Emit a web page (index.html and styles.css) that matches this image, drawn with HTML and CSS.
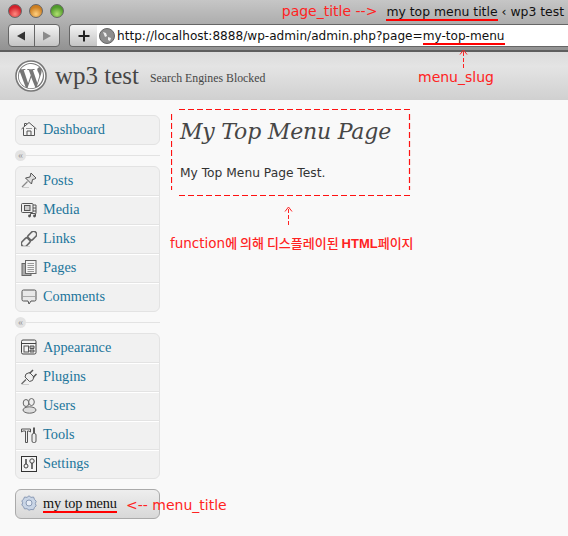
FILE: index.html
```html
<!DOCTYPE html>
<html lang="en">
<head>
    <meta charset="UTF-8">
    <meta name="viewport" content="width=device-width, initial-scale=1.0">
    <title>my top menu title ‹ wp3 test</title>
    <link rel="stylesheet" href="styles.css">
</head>
<body>
    <div class="browser">
        <div class="titlebar">
            <div class="lights">
                <span class="light red"></span>
                <span class="light orange"></span>
                <span class="light green"></span>
            </div>
            <div class="page-title"><span class="anno">page_title --&gt;</span><span class="underlined">my top menu title</span> ‹ wp3 test</div>
        </div>
        <div class="toolbar">
            <div class="nav-btns">
                <span class="nav-btn"><svg width="10" height="10" viewBox="0 0 10 10"><path d="M1 5 9 .5v9z" fill="#333"/></svg></span>
                <span class="nav-btn"><svg width="10" height="10" viewBox="0 0 10 10"><path d="M9 5 1 .5v9z" fill="#8a8a8a"/></svg></span>
            </div>
            <div class="address">
                <span class="add-btn"><svg width="12" height="12" viewBox="0 0 12 12"><path d="M6 .5v11M.5 6h11" stroke="#222" stroke-width="2"/></svg></span>
                <div class="url-field">
                    <svg class="globe" width="16" height="16" viewBox="0 0 16 16"><circle cx="8" cy="8" r="7.500" fill="#8d8d8d" stroke="#666"/><path d="M4 4l3 1 1 3-2 1zM9 9l3 1-1 3-2-1z" fill="#eee"/></svg>
                    <span class="url">http://localhost:8888/wp-admin/admin.php?page=<span class="underlined">my-top-menu</span></span>
                </div>
            </div>
        </div>
    </div>

    <div class="wp-header">
        <svg class="wp-logo" width="32" height="32" viewBox="0 0 33 33">
            <circle cx="16.500" cy="16.500" r="15.500" fill="#fff" stroke="#777" stroke-width="1.600"/>
            <circle cx="16.500" cy="16.500" r="13.400" fill="#777"/>
            <path d="M4 17c0 5 3 9 7 11L5 12c-.7 1.500-1 3.200-1 5zm21-1c0-1.500-.6-2.600-1-3.400-.7-1-1.200-1.800-1-2.900.1-1.200 1-2.200 2.200-2.200A13 13 0 0 0 6 9.500h.9c1.300 0 3.400-.2 3.400-.2.700 0 .8 1 .1 1.100 0 0-.7.100-1.400.1l4.500 13.400 2.700-8.100-1.900-5.300c-.7 0-1.300-.1-1.300-.1-.7 0-.6-1.100.1-1.100 0 0 2 .2 3.300.2 1.300 0 3.400-.2 3.400-.2.700 0 .8 1 .1 1.100 0 0-.7.100-1.400.1l4.500 13.300 1.200-4.100c.5-1.600.9-2.800.9-3.800zm-8.300 1.700L13 28.600a13 13 0 0 0 8-.2l-.1-.2zM27.300 10c.1.400.1.900.1 1.400 0 1.300-.2 2.800-1 4.600l-3.800 11A13 13 0 0 0 27.300 10z" fill="#fff"/>
        </svg>
        <span class="site-name">wp3 test</span>
        <span class="site-note">Search Engines Blocked</span>
        <span class="anno anno-slug">menu_slug</span>
    </div>

    <div class="wp-body">
        <nav class="sidebar">
            <ul class="menu-group">
                <li class="menu-item">
                    <svg class="icon" viewBox="0 0 16 16"><path d="M.5 8 8 1.500 15.500 8M2.500 7v7.500h11V7M6 14.500V10h4v4.500M3.500 5V2.500h2v1" fill="#f4f4f4" stroke="#555"/><path d="M5 7.500h6" stroke="#999"/></svg>
                    Dashboard
                </li>
            </ul>
            <div class="collapse"><span class="collapse-btn">«</span></div>
            <ul class="menu-group">
                <li class="menu-item">
                    <svg class="icon" viewBox="0 0 16 16"><path d="M1 15l5.500-5.500" stroke="#888" stroke-width="1.200"/><path d="M10 1l5 5-1.500 1-2 .5-1 4.500-6-6 4.500-1 .5-2z" fill="#ddd" stroke="#555"/><path d="M1 15.500h7" stroke="#ccc"/></svg>
                    Posts
                </li>
                <li class="menu-item">
                    <svg class="icon" viewBox="0 0 16 16"><rect x=".5" y="1.500" width="11.500" height="9" rx="1" fill="#eee" stroke="#555"/><rect x="3.500" y="3.500" width="5.500" height="5" fill="#ccc" stroke="#555"/><path d="M12 3h3v8.500M12 6h3M12 9h3" fill="none" stroke="#555"/><path d="M9.500 14V11.500h5v2.500" fill="none" stroke="#555"/><circle cx="8.500" cy="14" r="1.400" fill="#555"/><circle cx="13.500" cy="14" r="1.400" fill="#555"/></svg>
                    Media
                </li>
                <li class="menu-item">
                    <svg class="icon" viewBox="0 0 16 16"><g transform="rotate(-45 8 8)" fill="none" stroke="#666" stroke-width="1.600"><rect x="-1.500" y="5" width="10" height="6" rx="3"/><rect x="7.500" y="5" width="10" height="6" rx="3"/></g><path d="M1 15.500h8" stroke="#ccc"/></svg>
                    Links
                </li>
                <li class="menu-item">
                    <svg class="icon" viewBox="0 0 16 16"><rect x="1" y="3.500" width="9" height="12" fill="#aaa" stroke="#666"/><rect x="4.500" y=".5" width="10.500" height="13" fill="#f4f4f4" stroke="#666"/><path d="M6.500 3.500h6.500M6.500 5.500h6.500M6.500 7.500h6.500M6.500 9.500h6.500M6.500 11.500h6.500" stroke="#999"/></svg>
                    Pages
                </li>
                <li class="menu-item">
                    <svg class="icon" viewBox="0 0 16 16"><path d="M2.500 1h11a1.500 1.500 0 0 1 1.500 1.500v8a1.500 1.500 0 0 1-1.500 1.500H10l-2 3-1-3H2.500A1.500 1.500 0 0 1 1 10.500v-8A1.500 1.500 0 0 1 2.500 1z" fill="#e8e8e8" stroke="#555"/><path d="M2 7.500h12" stroke="#aaa"/></svg>
                    Comments
                </li>
            </ul>
            <div class="collapse"><span class="collapse-btn">«</span></div>
            <ul class="menu-group">
                <li class="menu-item">
                    <svg class="icon" viewBox="0 0 16 16"><rect x=".5" y="1" width="14.500" height="14" rx="1.500" fill="#f4f4f4" stroke="#444"/><path d="M1 4.500h14" stroke="#444"/><rect x="3" y="7" width="4.500" height="6" fill="#f4f4f4" stroke="#555"/><path d="M9 7h4v2.500H9zM9 11h4v2H9z" fill="#bbb" stroke="#555"/></svg>
                    Appearance
                </li>
                <li class="menu-item">
                    <svg class="icon" viewBox="0 0 16 16"><path d="M.5 15 5 10.500" stroke="#666" stroke-width="1.300"/><path d="M4 8l4.500 4.500 3-1 1.500-3.500-4.500-4.500L5 5z" fill="#eee" stroke="#555"/><path d="M8.500 4.500 12 1M12 8.500 15.500 5" stroke="#555" stroke-width="1.500"/><path d="M1 15.500h7" stroke="#ccc"/></svg>
                    Plugins
                </li>
                <li class="menu-item">
                    <svg class="icon" viewBox="0 0 16 16"><ellipse cx="5" cy="5" rx="2.800" ry="3.500" fill="#eee" stroke="#666"/><ellipse cx="10.500" cy="4" rx="2.800" ry="3.500" fill="#eee" stroke="#666"/><ellipse cx="8.500" cy="12" rx="6.500" ry="3.200" fill="#ddd" stroke="#666"/></svg>
                    Users
                </li>
                <li class="menu-item">
                    <svg class="icon" viewBox="0 0 16 16"><path d="M.5 2h9v3l-1.500-1H6.500v11.500h-2V4H2L.5 5z" fill="#eee" stroke="#555"/><path d="M13 .5v6" stroke="#333" stroke-width="1.600"/><rect x="11" y="6.500" width="4" height="9" rx="1.500" fill="#eee" stroke="#555"/></svg>
                    Tools
                </li>
                <li class="menu-item">
                    <svg class="icon" viewBox="0 0 16 16"><rect x=".5" y=".5" width="15" height="15" fill="#f4f4f4" stroke="#333"/><path d="M5 3v5M11 7v6" stroke="#444" stroke-width="1.500"/><circle cx="5" cy="10" r="2" fill="none" stroke="#444"/><circle cx="11" cy="5" r="2.200" fill="none" stroke="#444"/></svg>
                    Settings
                </li>
            </ul>
            <ul class="menu-group current">
                <li class="menu-item">
                    <svg class="icon" viewBox="0 0 16 16"><path d="M8 .8 10 2.400l2.500-.4 1 2.400 1.700 1.900-.9 2.300.9 2.300-1.700 1.500-1 2.300-2.500-.2L8 15.200l-2-1.500-2.500.2-1-2.300L.8 10.100l.9-2.300L.8 5.800l1.700-1.400 1-2.400 2.500.4z" fill="#c9d5e6" stroke="#8a9ab5"/><circle cx="8" cy="8" r="3" fill="#e6ecf5" stroke="#8a9ab5"/></svg>
                    <span class="menu-label">my top menu</span>
                    <span class="anno anno-title">&lt;-- menu_title</span>
                </li>
            </ul>
        </nav>

        <main class="content">
            <h2 class="page-heading">My Top Menu Page</h2>
            <p class="page-text">My Top Menu Page Test.</p>
            <!-- 빨간 점선 상자와 화살표 -->
            <svg class="dashed-box" width="240" height="88" viewBox="0 0 240 88"><path d="M8 .5h232M8 86.500h232M.5 5v76M238.500 5v76" fill="none" stroke="#f11" stroke-width="1.200" stroke-dasharray="6 3"/></svg>
            <svg class="arrow arrow-content" width="9" height="21" viewBox="0 0 9 21"><path d="M1 5.500 4.500 1 8 5.500" fill="none" stroke="#f22"/><path d="M4.500 3v18" stroke="#f22" stroke-dasharray="4 2"/></svg>
            <div class="anno anno-func">function<span class="ko">에 의해 디스플레이된 </span><b class="html">HTML</b><span class="ko">페이지</span></div>
        </main>
    </div>
    <svg class="arrow arrow-slug" width="9" height="20" viewBox="0 0 9 20"><path d="M1 5.500 4.500 1 8 5.500" fill="none" stroke="#f22"/><path d="M4.500 3v17" stroke="#f22" stroke-dasharray="4 2"/></svg>
</body>
</html>
```

FILE: styles.css
```css
body {
    margin: 0;
    width: 568px;
    height: 536px;
    overflow: hidden;
    position: relative;
    background: #f9f9f9;
    font-family: "Liberation Serif", serif;
}

ul {
    list-style: none;
    margin: 0;
    padding: 0;
}

/* browser chrome */
.browser {
    height: 52px;
    box-sizing: border-box;
    background: linear-gradient(#c6c6c6, #929292);
    border-bottom: 2px solid #5e5e5e;
}

.titlebar {
    height: 23px;
    display: flex;
    align-items: center;
    padding: 0 4px 1px 8px;
    box-sizing: border-box;
}

.lights {
    display: flex;
    gap: 7px;
}

.light {
    width: 12px;
    height: 12px;
    border-radius: 50%;
    border: 1px solid #666;
}

.red { background: radial-gradient(circle at 50% 75%, #ff8a80, #d3202a 65%); }
.orange { background: radial-gradient(circle at 50% 75%, #ffd080, #cc7d1e 65%); }
.green { background: radial-gradient(circle at 50% 75%, #b0e070, #4f9a2a 65%); }

.page-title {
    margin-left: auto;
    font-family: "DejaVu Sans", sans-serif;
    font-size: 12.4px;
    color: #111;
    white-space: nowrap;
}

.page-title .anno {
    margin-right: 9px;
}

.underlined {
    border-bottom: 2px solid #f00;
}

.toolbar {
    height: 24px;
    display: flex;
    padding: 1px 0 0 8px;
    gap: 9px;
}

.nav-btns {
    display: flex;
    height: 21px;
    width: 50px;
    border: 1px solid #666;
    border-radius: 4px;
    background: linear-gradient(#f4f4f4, #c4c4c4);
}

.nav-btn {
    flex: 1;
    display: flex;
    align-items: center;
    justify-content: center;
}

.nav-btn + .nav-btn {
    border-left: 1px solid #666;
}

.address {
    flex: 1;
    display: flex;
    height: 21px;
    border: 1px solid #666;
    border-right: 0;
    border-radius: 4px 0 0 4px;
    overflow: hidden;
}

.add-btn {
    width: 27px;
    display: flex;
    align-items: center;
    justify-content: center;
    background: linear-gradient(#f4f4f4, #c4c4c4);
}

.url-field {
    flex: 1;
    display: flex;
    align-items: center;
    gap: 2px;
    padding-left: 2px;
    background: #fff;
}

.url {
    font-family: "DejaVu Sans", sans-serif;
    font-size: 12.1px;
    color: #111;
    white-space: nowrap;
}

/* wp admin header */
.wp-header {
    height: 48px;
    display: flex;
    align-items: center;
    padding-left: 15px;
    background: linear-gradient(#dcdcdc, #e4e4e4 30%, #d0d0d0);
    position: relative;
}

.wp-logo {
    flex: none;
}

.site-name {
    font-size: 25px;
    color: #464646;
    margin-left: 8px;
}

.site-note {
    font-size: 11.8px;
    color: #464646;
    margin-left: 11px;
    padding-top: 4px;
}

.wp-body {
    display: flex;
    padding-top: 15px;
}

/* sidebar */
.sidebar {
    width: 145px;
    margin-left: 15px;
    flex: none;
}

.menu-group {
    background: #f1f1f1;
    border: 1px solid #e3e3e3;
    border-radius: 6px;
    overflow: hidden;
}

.menu-group.current {
    margin-top: 10px;
    background: linear-gradient(#eeeeee, #d8d8d8);
    border-color: #aaa;
    overflow: visible;
}

.menu-item {
    height: 29px;
    box-sizing: border-box;
    display: flex;
    align-items: center;
    position: relative;
    padding: 0 0 2px 5px;
    font-size: 14.3px;
    color: #21759b;
    border-top: 1px solid #fff;
    border-bottom: 1px solid #e3e3e3;
}

.menu-item:first-child {
    border-top: 0;
}

.menu-item:last-child {
    height: 28px;
    border-bottom: 0;
}

.icon {
    width: 16px;
    height: 16px;
    margin-right: 6px;
    flex: none;
}

.current .menu-item {
    color: #111;
    letter-spacing: -.15px;
}

.menu-label {
    border-bottom: 2px solid #f00;
    line-height: 14px;
    padding-bottom: 1px;
    margin-top: 2px;
}

.collapse {
    height: 21px;
    display: flex;
    align-items: center;
    background: linear-gradient(#e3e3e3, #e3e3e3) center / 100% 1px no-repeat;
}

.collapse-btn {
    width: 11px;
    height: 11px;
    border-radius: 50%;
    background: #e3e3e3;
    color: #999;
    font-size: 10px;
    line-height: 9px;
    text-align: center;
}

/* content */
.content {
    position: relative;
    padding: 2px 0 0 20px;
    flex: 1;
}

.page-heading {
    margin: 0;
    font-family: "DejaVu Serif", serif;
    font-style: italic;
    font-weight: 400;
    font-size: 22px;
    letter-spacing: -.2px;
    line-height: 30px;
    color: #464646;
}

.page-text {
    margin: 19px 0 0;
    font-family: "DejaVu Sans", sans-serif;
    font-size: 12.25px;
    color: #333;
}

/* red notes drawn on top of the screenshot */
.anno {
    font-family: "DejaVu Sans", sans-serif;
    font-size: 14px;
    color: #f22;
    white-space: nowrap;
    letter-spacing: 0;
}

.dashed-box {
    position: absolute;
    left: 11px;
    top: -6px;
}

.arrow {
    position: absolute;
}

.arrow-content {
    left: 124px;
    top: 91px;
}

.arrow-slug {
    left: 459px;
    top: 49px;
}

.anno-func {
    position: absolute;
    left: 10px;
    top: 118px;
    font-size: 13.5px;
}

.ko {
    font-family: "Noto Sans CJK KR", sans-serif;
    font-size: 13px;
    font-weight: 500;
}

.html {
    font-family: "Liberation Sans", sans-serif;
    font-size: 13px;
    font-weight: 700;
}

.anno-slug {
    position: absolute;
    left: 418px;
    top: 17px;
}

.anno-title {
    position: absolute;
    left: 110px;
    top: 7px;
}
```
